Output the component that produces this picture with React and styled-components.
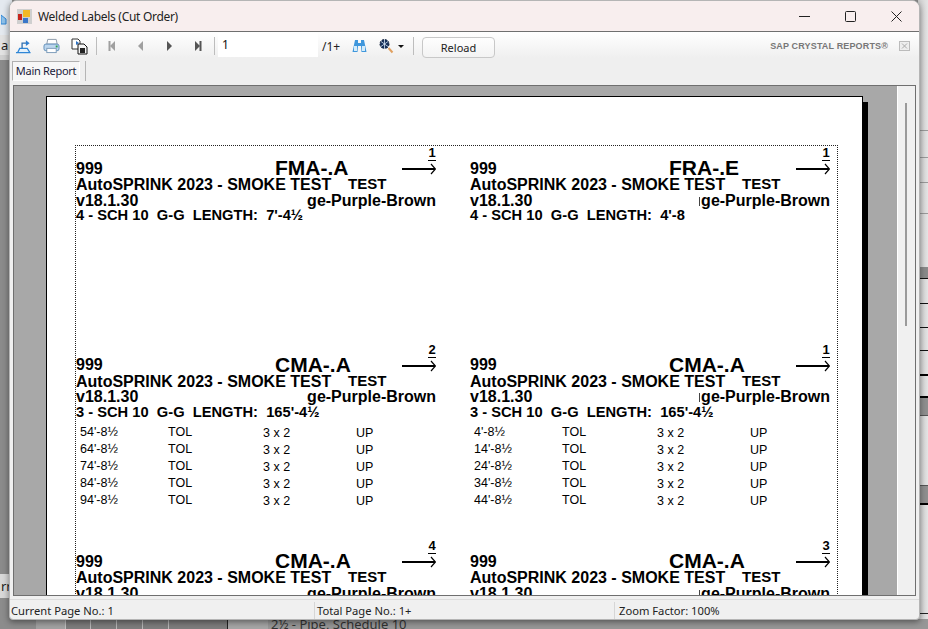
import React from 'react';
import styled, { createGlobalStyle } from 'styled-components';

const GlobalStyle = createGlobalStyle`
  html, body { margin: 0; padding: 0; height: 100%; overflow: hidden; background: #8c8c8c; }
  #root { height: 100%; }
  * { box-sizing: border-box; }
`;

const uiFont = `"Noto Sans", "Open Sans", sans-serif`;
const reportFont = `"Liberation Sans", Arial, sans-serif`;

const Desktop = styled.div`
  position: relative;
  width: 928px;
  height: 629px;
  overflow: hidden;
  background: #8c8c8c;
  font-family: ${uiFont};
`;

/* the other app showing round the dialog */
const BackLeft = styled.div`
  position: absolute;
  left: 0;
  top: 0;
  width: 12px;
  height: 629px;
  display: flex;
  flex-direction: column;
  font-size: 13px;
  color: #222;
`;
const BackLeftBand = styled.div`
  height: ${(p) => p.$h}px;
  background: ${(p) => p.$bg};
  line-height: ${(p) => p.$h}px;
  padding-left: 1px;
  overflow: hidden;
  white-space: nowrap;
`;
const BackRight = styled.div`
  position: absolute;
  right: 0;
  top: 0;
  width: 10px;
  height: 629px;
  background: linear-gradient(90deg, #cfcfcf, #e4e4e4);
`;
const BackRightLine = styled.div`
  position: absolute;
  left: 0;
  right: 0;
  top: ${(p) => p.$y}px;
  height: ${(p) => p.$h || 1}px;
  background: ${(p) => p.$c || '#111'};
`;
const BackBottom = styled.div`
  position: absolute;
  left: 0;
  right: 0;
  bottom: 0;
  height: 10px;
  display: flex;
  align-items: stretch;
  background: #8f8f8f;
`;
const BackCell = styled.div`
  width: ${(p) => p.$w}px;
  background: ${(p) => p.$bg};
  border-right: 1px solid ${(p) => p.$line || 'transparent'};
`;
const BackText = styled.div`
  padding-left: 3px;
  font-size: 13px;
  line-height: 10px;
  color: #333;
  white-space: nowrap;
  background: #979797;
  flex: 1;
`;

const Window = styled.div`
  position: absolute;
  left: 9px;
  top: 0;
  width: 911px;
  height: 620px;
  display: flex;
  flex-direction: column;
  background: #f0f0f0;
  border: 1px solid #b5b5b5;
  border-radius: 8px 8px 4px 4px;
  overflow: hidden;
  box-shadow: 0 2px 6px rgba(0, 0, 0, 0.45);
`;
const TitleBar = styled.div`
  height: 31px;
  flex: none;
  display: flex;
  align-items: center;
  background: #f8eeee;
  border-bottom: 1px solid #6f6f6f;
  padding-left: 7px;
`;
const AppIcon = styled.svg`
  width: 15px;
  height: 15px;
  flex: none;
`;
const TitleText = styled.div`
  margin-left: 6px;
  font-size: 12px;
  letter-spacing: -0.3px;
  color: #222;
  flex: 1;
`;
const WinButton = styled.div`
  width: 46px;
  height: 30px;
  display: flex;
  align-items: center;
  justify-content: center;
`;

const Toolbar = styled.div`
  height: 26px;
  flex: none;
  display: flex;
  align-items: center;
  background: linear-gradient(180deg, #ffffff, #efefef);
  padding: 2px 0 0 3px;
  font-size: 12px;
`;
const ToolSlot = styled.div`
  width: ${(p) => p.$w}px;
  height: 24px;
  flex: none;
  display: flex;
  align-items: center;
  justify-content: center;
`;
const ToolSep = styled.div`
  width: 1px;
  height: 18px;
  flex: none;
  background: #bdbdbd;
  margin: 0 ${(p) => p.$mr ?? 3}px 0 ${(p) => p.$ml ?? 2}px;
`;
const PageInput = styled.div`
  width: 100px;
  height: 24px;
  margin-top: -2px;
  flex: none;
  background: #fff;
  line-height: 23px;
  padding-left: 4px;
  color: #111;
`;
const PageTotal = styled.div`
  width: 30px;
  flex: none;
  padding-left: 4px;
  color: #222;
`;
const ReloadButton = styled.div`
  width: 73px;
  height: 21px;
  margin-top: 3px;
  flex: none;
  border: 1px solid #c8c8c8;
  border-radius: 4px;
  background: linear-gradient(180deg, #fefefe, #f3f3f3);
  font-size: 11px;
  color: #222;
  text-align: center;
  line-height: 19px;
`;
const Brand = styled.div`
  margin-left: auto;
  font-family: ${reportFont};
  font-weight: 700;
  font-size: 9px;
  letter-spacing: 0.15px;
  color: #777;
  white-space: nowrap;
`;
const BrandClose = styled.svg`
  width: 11px;
  height: 10px;
  margin: 0 9px 0 11px;
  flex: none;
`;

const TabStrip = styled.div`
  height: 27px;
  flex: none;
  display: flex;
  align-items: flex-start;
  padding: 3px 0 0 2px;
  background: #efefef;
`;
const Tab = styled.div`
  width: 68px;
  height: 20px;
  border: 1px solid #b0b0b0;
  border-right-color: #fff;
  border-bottom-color: #fff;
  background: #f7f7f7;
  font-size: 11px;
  letter-spacing: -0.3px;
  line-height: 18px;
  text-align: center;
  color: #1a1a3a;
  white-space: nowrap;
`;
const TabSep = styled.div`
  width: 1px;
  height: 20px;
  margin-left: 5px;
  background: #b5b5b5;
`;

const Viewer = styled.div`
  flex: 1;
  min-height: 0;
  margin: 0 3px 0 3px;
  display: flex;
  border: 1px solid #6f6f6f;
  overflow: hidden;
`;
const PageArea = styled.div`
  flex: 1;
  min-width: 0;
  background: #a8a8a8;
  padding: 10px 0 0 32px;
  overflow: hidden;
`;
const Page = styled.div`
  width: 817px;
  height: 700px;
  background: #fff;
  border: 1px solid #000;
  box-shadow: 5px 6px 0 #000;
  padding: 48px 0 0 28px;
`;
const LabelGrid = styled.div`
  width: 763px;
  display: grid;
  grid-template-columns: 394px 369px;
  grid-auto-rows: 196.5px;
  border: 1px dotted #222;
  border-bottom: none;
  font-family: ${reportFont};
  color: #000;
`;
const Label = styled.div`
  display: flex;
  flex-direction: column;
`;
const LabelHead = styled.div`
  height: 30px;
  margin-bottom: 1px;
  display: grid;
  grid-template-columns: 199px 127px 34px;
  align-items: end;
`;
const BoldText = styled.div`
  position: relative;
  font-weight: 700;
  font-size: ${(p) => p.$size || 16}px;
  line-height: ${(p) => p.$lh || 15.5}px;
  white-space: pre;
`;
const ColorTick = styled.span`
  position: absolute;
  left: -2px;
  top: 4px;
  width: 1px;
  height: 9px;
  background: #444;
`;
const ArrowBlock = styled.div`
  position: relative;
  height: 30px;
`;
const ArrowCount = styled.div`
  position: absolute;
  right: 0;
  top: 0;
  font-weight: 700;
  font-size: 13px;
  line-height: 14px;
  border-bottom: 1px solid #000;
  width: 8px;
  text-align: center;
`;
const ArrowSvg = styled.svg`
  position: absolute;
  left: 0;
  bottom: 1px;
  width: 34px;
  height: 12px;
`;
const LabelLine = styled.div`
  display: flex;
  width: 360px;
  justify-content: ${(p) => (p.$split ? 'space-between' : 'flex-start')};
`;
const ProjectName = styled(BoldText)`
  width: 272px;
`;
const TagText = styled(BoldText)`
  margin-top: -1px;
`;
const CutRows = styled.div`
  margin-top: 4px;
  display: flex;
  flex-direction: column;
`;
const CutRow = styled.div`
  height: 17.1px;
  display: grid;
  grid-template-columns: 88px 95px 93px auto;
  padding-left: 4px;
  font-size: 12.5px;
  line-height: 17px;
  white-space: nowrap;
`;
const CutCell = styled.span`
  padding-top: ${(p) => (p.$low ? 1 : 0)}px;
`;

const ScrollBar = styled.div`
  width: 18px;
  flex: none;
  background: #f0f0f0;
  border-left: 1px solid #fff;
  padding: 17px 0 0 7px;
`;
const ScrollThumb = styled.div`
  width: 2px;
  height: 223px;
  background: #9a9a9a;
`;

const StatusBar = styled.div`
  height: 20px;
  flex: none;
  display: flex;
  align-items: center;
  padding-top: 2px;
  margin-top: 3px;
  font-size: 11.2px;
  color: #222;
  border-top: 1px solid #dcdcdc;
`;
const StatusCell = styled.div`
  width: ${(p) => p.$w}px;
  height: 17px;
  line-height: 17px;
  padding-left: ${(p) => p.$pad}px;
  border-right: 1px solid ${(p) => (p.$last ? 'transparent' : '#d6d6d6')};
  white-space: nowrap;
`;

const Tri = ({ dir, bar, color }) => (
  <svg width="9" height="10" viewBox="0 0 9 10">
    {dir === 'left' ? (
      <polygon points="7,0 2,5 7,10" fill={color} />
    ) : (
      <polygon points="2,0 7,5 2,10" fill={color} />
    )}
    {bar && <rect x={dir === 'left' ? 0.5 : 6.5} y="0" width="2" height="10" fill={color} />}
  </svg>
);

const ExportIcon = () => (
  <svg width="17" height="16" viewBox="0 0 18 17" fill="none">
    <path d="M1 15.5h15.5M3 15l2-4h8l2.5 4" stroke="#2f86d6" strokeWidth="1.3" fill="#e4f1fb" />
    <path d="M7.5 11V5.5h5" stroke="#2f6fb0" strokeWidth="1.4" />
    <polygon points="11.5,2.5 15.5,5.5 11.5,8.5" fill="#2f7fd0" />
  </svg>
);
const PrintIcon = () => (
  <svg width="17" height="16" viewBox="0 0 18 17">
    <path d="M5 1.5h9l1 5H4z" fill="#fff" stroke="#8a98a8" />
    <rect x="1" y="6.5" width="16" height="7" rx="2" fill="#bcd6ee" stroke="#5f8db8" />
    <rect x="4" y="11" width="10" height="4.5" fill="#fff" stroke="#7a9ab8" />
    <rect x="13.5" y="8" width="2" height="2" fill="#2aa050" />
  </svg>
);
const CopyIcon = () => (
  <svg width="17" height="17" viewBox="0 0 17 17">
    <path d="M1 1h6l2 2v8H1z" fill="#fff" stroke="#333" />
    <path d="M7 6h6l3 3v7H7z" fill="#f4f4f4" stroke="#111" />
    <rect x="9" y="10" width="5" height="5" fill="#222" />
    <path d="M5 3l3 2-3 2z" fill="#2a6fc0" />
  </svg>
);
const BinocularIcon = () => (
  <svg width="15" height="14" viewBox="0 0 15 14">
    <path d="M3 1h3v3h3V1h3l2.5 12h-5L9 7H6l-.5 6h-5z" fill="#3f97dc" />
    <rect x="2" y="7" width="3" height="5" fill="#d3ecfb" />
    <rect x="10" y="7" width="3" height="5" fill="#d3ecfb" />
  </svg>
);
const ZoomIcon = () => (
  <svg width="16" height="16" viewBox="0 0 16 16">
    <circle cx="6.5" cy="6" r="4.5" fill="#16305a" stroke="#12203a" strokeDasharray="2 1" />
    <path d="M3 3.5l7 5M3 8.5l7-5M6.5 1v10" stroke="#d8e6f4" strokeWidth="0.8" />
    <path d="M10.5 10l4 4.5" stroke="#e0a060" strokeWidth="2" />
  </svg>
);
const Caret = () => (
  <svg width="6" height="3" viewBox="0 0 6 3">
    <polygon points="0,0 6,0 3,3" fill="#111" />
  </svg>
);

const short = (head, count) => ({ ...head, count, rows: [] });
const base = {
  job: '999',
  project: 'AutoSPRINK 2023 - SMOKE TEST',
  tag: 'TEST',
  version: 'v18.1.30',
  color: 'ge-Purple-Brown',
};
const rowsOf = (list) => list.map((len) => [len, 'TOL', '3 x 2', 'UP']);

const labels = [
  short({ ...base, mark: 'FMA-.A', spec: "4 - SCH 10  G-G  LENGTH:  7'-4½" }, 1),
  short({ ...base, mark: 'FRA-.E', spec: "4 - SCH 10  G-G  LENGTH:  4'-8" }, 1),
  {
    ...base,
    mark: 'CMA-.A',
    count: 2,
    spec: "3 - SCH 10  G-G  LENGTH:  165'-4½",
    rows: rowsOf(["54'-8½", "64'-8½", "74'-8½", "84'-8½", "94'-8½"]),
  },
  {
    ...base,
    mark: 'CMA-.A',
    count: 1,
    spec: "3 - SCH 10  G-G  LENGTH:  165'-4½",
    rows: rowsOf(["4'-8½", "14'-8½", "24'-8½", "34'-8½", "44'-8½"]),
  },
  short({ ...base, mark: 'CMA-.A', spec: '' }, 4),
  short({ ...base, mark: 'CMA-.A', spec: '' }, 3),
];

const rightLines = [
  [130, '#9a9a9a'], [157, '#9a9a9a'], [182, '#9a9a9a'], [213, '#9a9a9a'],
  [267, '#8a8a8a', 11], [278], [303], [327], [350], [374, '#000', 2], [396, '#000', 2],
  [398, '#8f8f8f', 17], [415, '#555'], [485, '#555'], [486, '#8f8f8f', 17], [503, '#000', 2], [613, '#222'],
];

const ReportLabel = ({ item, tick }) => (
  <Label>
    <LabelHead>
      <BoldText>{item.job}</BoldText>
      <BoldText $size={21} $lh={16}>{item.mark}</BoldText>
      <ArrowBlock>
        <ArrowCount>{item.count}</ArrowCount>
        <ArrowSvg viewBox="0 0 34 12">
          <path d="M0 6h33" stroke="#000" strokeWidth="2.2" />
          <path d="M29 1l4.5 5-4.5 5" stroke="#000" strokeWidth="1.2" fill="none" />
        </ArrowSvg>
      </ArrowBlock>
    </LabelHead>
    <LabelLine>
      <ProjectName>{item.project}</ProjectName>
      <TagText $size={15}>{item.tag}</TagText>
    </LabelLine>
    <LabelLine $split>
      <BoldText>{item.version}</BoldText>
      <BoldText>
        {tick && <ColorTick />}
        {item.color}
      </BoldText>
    </LabelLine>
    <LabelLine>
      <BoldText $size={14.7}>{item.spec}</BoldText>
    </LabelLine>
    {item.rows.length > 0 && (
      <CutRows>
        {item.rows.map((row) => (
          <CutRow key={row[0]}>
            {row.map((cell, i) => (
              <CutCell key={i} $low={i >= 2}>{cell}</CutCell>
            ))}
          </CutRow>
        ))}
      </CutRows>
    )}
  </Label>
);

const App = () => (
  <Desktop>
    <GlobalStyle />
    <BackLeft>
      <BackLeftBand $h={35} $bg="#e4e9ef">
        <svg width="9" height="35" viewBox="0 0 9 35">
          <path d="M0 15l5 4v5H0z" fill="#8fc2ea" stroke="#2f86d6" />
        </svg>
      </BackLeftBand>
      <BackLeftBand $h={20} $bg="#e2e2e2">ai</BackLeftBand>
      <BackLeftBand $h={5} $bg="#d0d0d0" />
      <BackLeftBand $h={514} $bg="#8b8b8b" />
      <BackLeftBand $h={24} $bg="#d8d8d8">rr</BackLeftBand>
      <BackLeftBand $h={31} $bg="#8c8c8c" />
    </BackLeft>
    <BackRight>
      {rightLines.map(([y, c, h]) => (
        <BackRightLine key={y} $y={y} $c={c} $h={h} />
      ))}
    </BackRight>
    <BackBottom>
      <BackCell $w={36} $bg="#8c8c8c" />
      <BackCell $w={30} $bg="#a2a2a2" $line="#c0c0c0" />
      <BackCell $w={25} $bg="#7d7d7d" $line="#b8b8b8" />
      <BackCell $w={26} $bg="#7d7d7d" $line="#b8b8b8" />
      <BackCell $w={26} $bg="#7d7d7d" $line="#b8b8b8" />
      <BackCell $w={26} $bg="#7d7d7d" $line="#b8b8b8" />
      <BackCell $w={59} $bg="#7d7d7d" $line="#222" />
      <BackCell $w={40} $bg="#a6a6a6" />
      <BackText>2½ - Pipe, Schedule 10</BackText>
    </BackBottom>

    <Window>
      <TitleBar>
        <AppIcon viewBox="0 0 15 15">
          <rect x="0" y="0" width="15" height="15" fill="#cfcfcf" />
          <rect x="1" y="5" width="4" height="6" fill="#c8241c" />
          <rect x="6" y="1" width="7" height="7" fill="#f2b824" />
          <rect x="6" y="9" width="5" height="5" fill="#3a76c8" />
        </AppIcon>
        <TitleText>Welded Labels (Cut Order)</TitleText>
        <WinButton>
          <svg width="11" height="1" viewBox="0 0 11 1"><rect width="11" height="1" fill="#222" /></svg>
        </WinButton>
        <WinButton>
          <svg width="11" height="11" viewBox="0 0 11 11"><rect x="0.5" y="0.5" width="10" height="10" rx="1" fill="none" stroke="#222" /></svg>
        </WinButton>
        <WinButton>
          <svg width="11" height="11" viewBox="0 0 11 11"><path d="M0.5 0.5l10 10M10.5 0.5l-10 10" stroke="#222" /></svg>
        </WinButton>
      </TitleBar>

      <Toolbar>
        <ToolSlot $w={20}><ExportIcon /></ToolSlot>
        <ToolSlot $w={36}><PrintIcon /></ToolSlot>
        <ToolSlot $w={20}><CopyIcon /></ToolSlot>
        <ToolSep $ml={7} />
        <ToolSlot $w={24}><Tri dir="left" bar color="#a0a0a0" /></ToolSlot>
        <ToolSlot $w={32}><Tri dir="left" color="#a0a0a0" /></ToolSlot>
        <ToolSlot $w={26}><Tri dir="right" color="#555" /></ToolSlot>
        <ToolSlot $w={30}><Tri dir="right" bar color="#555" /></ToolSlot>
        <ToolSep />
        <PageInput>1</PageInput>
        <PageTotal>/1+</PageTotal>
        <ToolSlot $w={22}><BinocularIcon /></ToolSlot>
        <ToolSlot $w={7} />
        <ToolSlot $w={18}><ZoomIcon /></ToolSlot>
        <ToolSlot $w={11}><Caret /></ToolSlot>
        <ToolSep $ml={7} $mr={8} />
        <ReloadButton>Reload</ReloadButton>
        <Brand>SAP CRYSTAL REPORTS®</Brand>
        <BrandClose viewBox="0 0 11 10">
          <rect x="0.5" y="0.5" width="10" height="9" fill="#eee" stroke="#bbb" />
          <path d="M3 2.5l5 5M8 2.5l-5 5" stroke="#aaa" />
        </BrandClose>
      </Toolbar>

      <TabStrip>
        <Tab>Main Report</Tab>
        <TabSep />
      </TabStrip>

      <Viewer>
        <PageArea>
          <Page>
            <LabelGrid>
              {labels.map((item, i) => (
                <ReportLabel key={i} item={item} tick={i % 2 === 1} />
              ))}
            </LabelGrid>
          </Page>
        </PageArea>
        <ScrollBar>
          <ScrollThumb />
        </ScrollBar>
      </Viewer>

      <StatusBar>
        <StatusCell $w={305} $pad={1}>Current Page No.: 1</StatusCell>
        <StatusCell $w={300} $pad={2}>Total Page No.: 1+</StatusCell>
        <StatusCell $w={300} $pad={4} $last>Zoom Factor: 100%</StatusCell>
      </StatusBar>
    </Window>
  </Desktop>
);

export default App;
